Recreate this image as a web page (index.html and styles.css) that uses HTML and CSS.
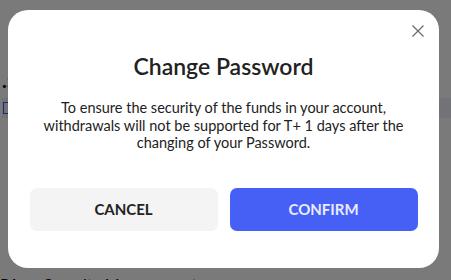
FILE: index.html
```html
<!DOCTYPE html>
<html>
<head>
<meta charset="utf-8">
<link rel="stylesheet" href="styles.css">
</head>
<body>
<div class="page">
  <div class="bg-top"></div>
  <div class="bg-mid">
    <span class="bg-colon">.:</span>
    <div class="bg-row"><span class="bg-icon"></span></div>
  </div>
  <div class="bg-bottom"><span class="bg-pa">PA</span><span class="bg-sec">Security Management</span></div>
</div>
<div class="overlay">
  <div class="modal">
    <button class="close" aria-label="Close">
      <svg width="12" height="12" viewBox="0 0 12 12"><path d="M0.5 0.5L11.5 11.5M11.5 0.5L0.5 11.5" stroke="#6a6a6a" stroke-width="1.2" fill="none"/></svg>
    </button>
    <h2 class="title">Change Password</h2>
    <p class="desc">To ensure the security of the funds in your account, withdrawals will not be supported for T+ 1 days after the changing of your Password.</p>
    <div class="actions">
      <button class="btn btn-cancel">CANCEL</button>
      <button class="btn btn-confirm">CONFIRM</button>
    </div>
  </div>
</div>
</body>
</html>
```

FILE: styles.css
```css
html, body {
  margin: 0;
  padding: 0;
  width: 451px;
  height: 280px;
  overflow: hidden;
  font-family: Lato, "Noto Sans", sans-serif;
}
.page {
  width: 451px;
  height: 280px;
  overflow: hidden;
  background: #fff;
  display: flex;
  flex-direction: column;
}
.page > * { flex-shrink: 0; }
.bg-top { height: 68px; }
.bg-mid {
  height: 206px;
  display: flex;
  flex-direction: column;
  gap: 6px;
  padding-left: 2px;
}
.bg-colon { font-size: 20px; color: #000; font-weight: bold; line-height: 24px; }
.bg-row { background: #eef1fb; height: 20px; display: flex; align-items: center; }
.bg-icon { width: 6px; height: 10px; border: 1.5px solid #3b5bdb; background: #e8edff; margin-left: 1px; }
.bg-bottom { font-size: 16px; line-height: 20px; color: #111; display: flex; gap: 24px; }
.overlay {
  position: fixed;
  inset: 0;
  background: rgba(0,0,0,0.52);
  display: flex;
  padding: 10px 12px 12px 8px;
  box-sizing: border-box;
}
.modal {
  position: relative;
  width: 431px;
  height: 258px;
  background: #fff;
  border-radius: 20px;
  box-sizing: border-box;
  padding: 42px 20px 0 20px;
  display: flex;
  flex-direction: column;
  align-items: center;
}
.close {
  position: absolute;
  top: 15px;
  right: 15px;
  border: 0;
  background: none;
  padding: 0;
  width: 12px;
  height: 12px;
  display: flex;
}
.title {
  margin: 0;
  font-size: 23px;
  font-weight: 600;
  color: #222;
  line-height: 28px;
}
.desc {
  margin: 19px 0 0;
  max-width: 386px;
  font-size: 14.5px;
  line-height: 17.5px;
  color: #222;
  text-align: center;
}
.actions {
  margin-top: 36px;
  display: flex;
  gap: 12px;
  width: 388px;
}
.btn {
  flex: 1;
  height: 43px;
  border: 0;
  border-radius: 7px;
  font-family: Lato, "Noto Sans", sans-serif;
  font-size: 15px;
  font-weight: 700;
}
.btn-cancel { background: #f4f4f4; color: #222; }
.btn-confirm { background: #465ff5; color: #e9ecff; }
```
